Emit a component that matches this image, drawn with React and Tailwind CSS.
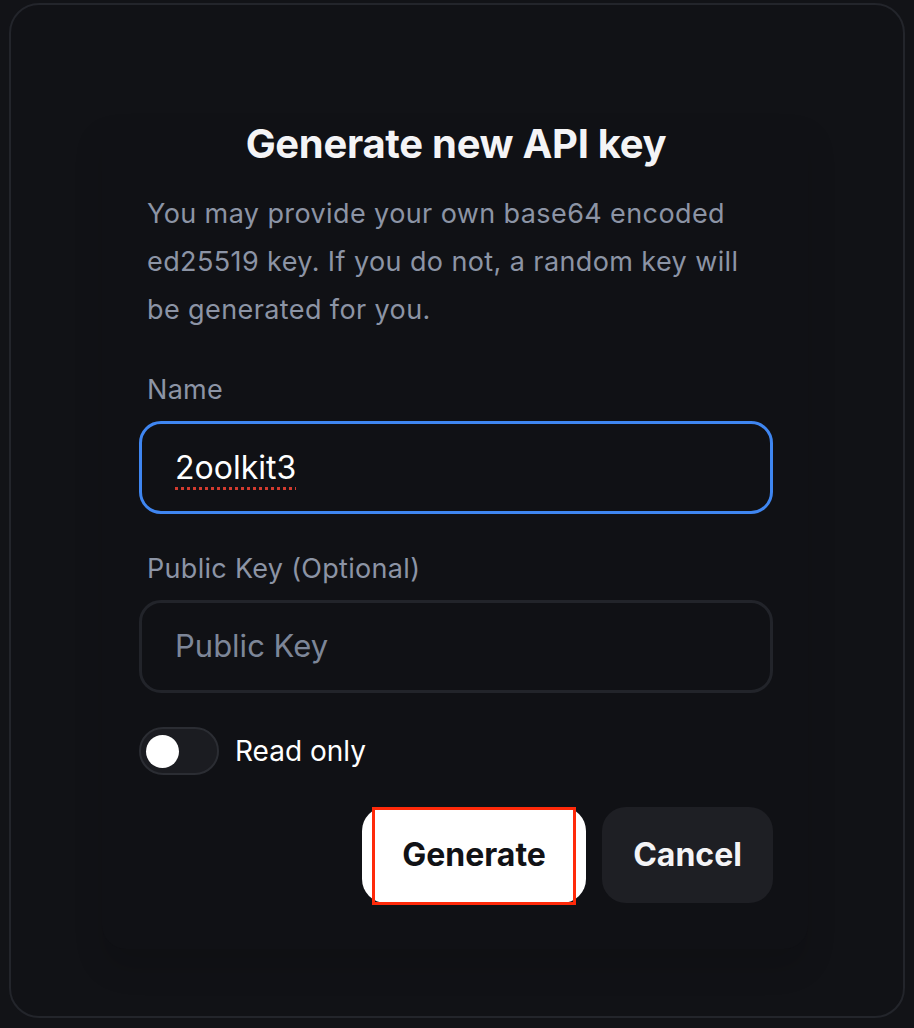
export default function App() {
  return (
    <div className="w-[914px] h-[1028px] bg-[#121317] pt-[3px] px-[9px]" style={{ fontFamily: "Inter, 'Noto Sans', sans-serif" }}>
      <div className="h-[1015px] rounded-[30px] border-2 border-[#23252b] bg-[#111216] flex flex-col items-start pt-[115px]">
        <div className="ml-[91px] w-[706px] rounded-b-[24px] bg-[#101115] shadow-[0_20px_30px_rgba(0,0,0,0.12)] pl-[37px] pr-[35px] pb-[46px] flex flex-col">
          <h1 className="text-center text-[40px] leading-[48px] font-bold text-[#f4f4f6] tracking-[-0.3px]">Generate new API key</h1>
          <p className="mt-[22px] pl-2 pr-[16px] text-[27px] leading-[48px] tracking-[0.4px] text-[#8c94a5]">
            You may provide your own base64 encoded ed25519 key. If you do not, a random key will be generated for you.
          </p>
          <label className="mt-[40px] px-2 text-[27px] leading-[32px] tracking-[0.3px] text-[#8c94a5]">Name</label>
          <div className="mt-[15px] h-[93px] rounded-[22px] border-[3px] border-[#3f86f1] flex items-center px-[33px]">
            <span className="text-[32px] text-white underline decoration-dotted decoration-[#d33b2f] decoration-[3px] underline-offset-[8px]">2oolkit3</span>
          </div>
          <label className="mt-[39px] px-2 text-[27px] leading-[32px] tracking-[0.3px] text-[#8c94a5]">Public Key (Optional)</label>
          <div className="mt-[15px] h-[93px] rounded-[22px] border-[3px] border-[#22242a] flex items-center px-[33px]">
            <span className="text-[31px] text-[#7d8698]">Public Key</span>
          </div>
          <div className="mt-[34px] flex items-center gap-[16px]">
            <div className="w-[80px] h-[48px] rounded-full bg-[#1b1c21] border-2 border-[#2b2d33] flex items-center pl-[5px]">
              <div className="w-[33px] h-[33px] rounded-full bg-white"></div>
            </div>
            <span className="text-[28px] text-white">Read only</span>
          </div>
          <div className="mt-[32px] flex justify-end gap-[16px]">
            <div className="relative w-[224px] h-[96px] rounded-[24px] bg-white flex items-center justify-center">
              <span className="text-[32px] font-bold text-[#111216]">Generate</span>
              <div className="absolute left-[10px] top-0 w-[204px] h-[98px] border-[3px] border-[#ff2a0a]"></div>
            </div>
            <div className="w-[171px] h-[96px] rounded-[24px] bg-[#1e1f24] flex items-center justify-center">
              <span className="text-[32px] font-bold text-[#f4f4f6]">Cancel</span>
            </div>
          </div>
        </div>
      </div>
    </div>
  );
}
